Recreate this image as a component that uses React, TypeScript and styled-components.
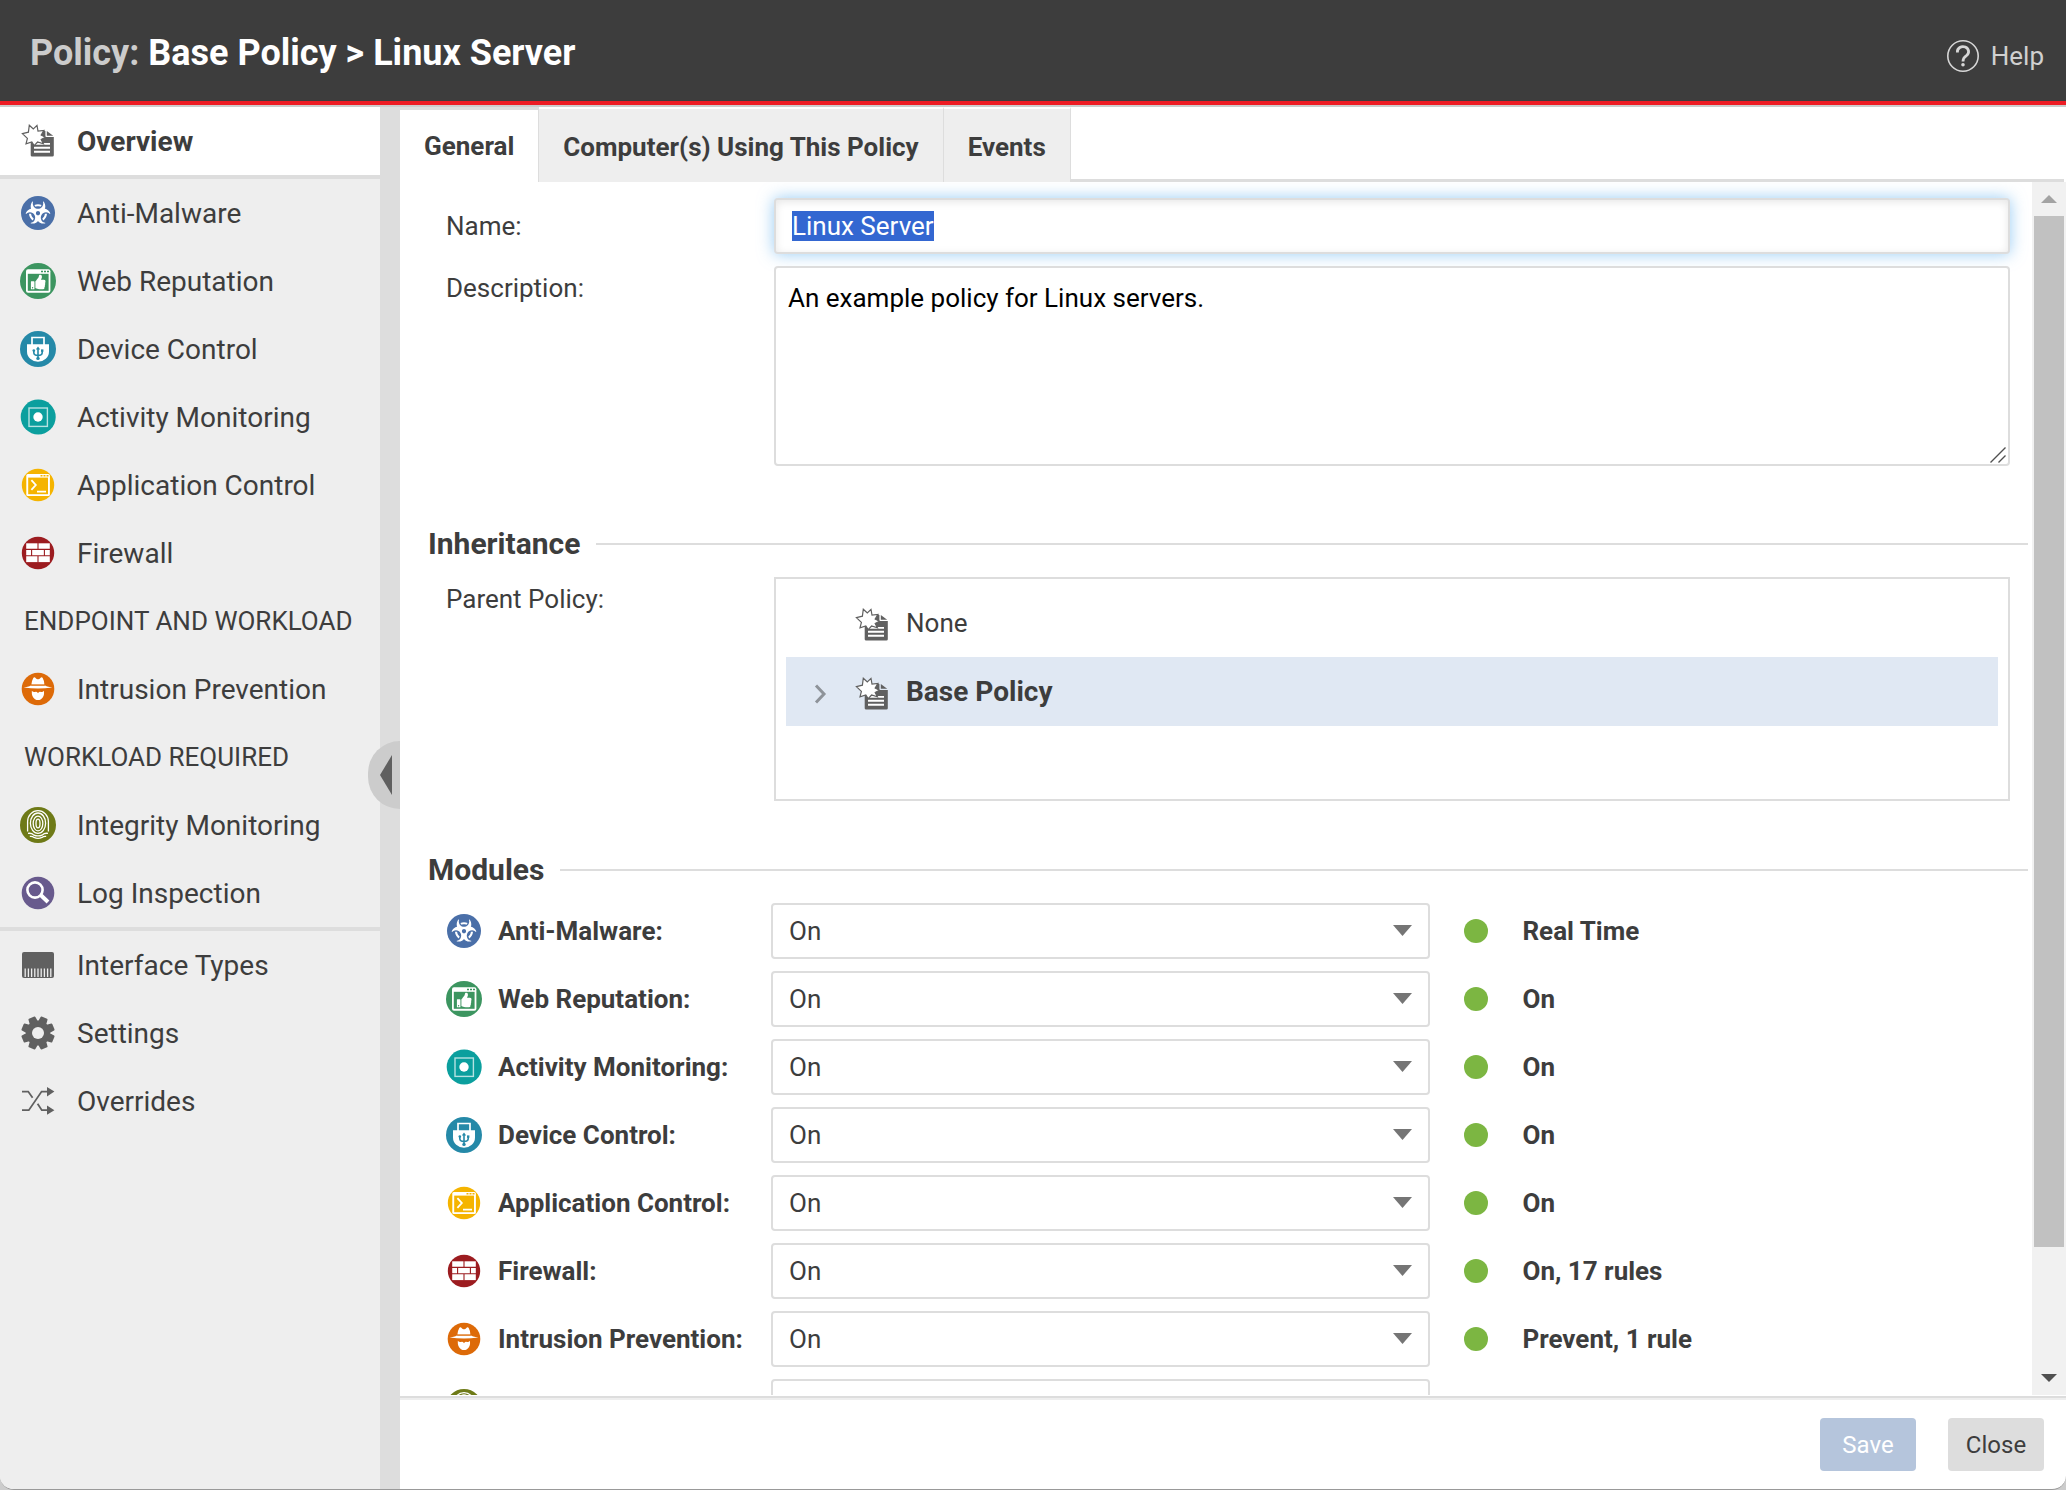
import React, { useEffect, useRef } from "react";
import styled, { createGlobalStyle, css } from "styled-components";
import { FaBiohazard, FaThumbsUp } from "react-icons/fa";

const c = {
  ink: "#3d3d3d",
  line: "#dddddd",
  panel: "#eeeeee",
  icon: "#606060",
  select: "#e0e8f3",
};

const GlobalStyle = createGlobalStyle`
  *, *::before, *::after { box-sizing: border-box; }
  body {
    margin: 0;
    background: #cccccc;
    color: ${c.ink};
    font-family: Roboto, "Liberation Sans", sans-serif;
    font-size: 26px;
    line-height: 32px;
  }
  button, input, select, textarea { font: inherit; color: inherit; }
  svg { display: block; flex: none; }
`;

/* ---------- icons ---------- */

type IconName =
  | "policy" | "malware" | "web" | "device" | "activity" | "application"
  | "firewall" | "intrusion" | "integrity" | "log" | "interface" | "settings" | "overrides";

const gearPath = (() => {
  const pts: string[] = [];
  for (let i = 0; i < 8; i++) {
    const mid = (i * 45 + 22.5) * (Math.PI / 180);
    [[-0.3, 11.6], [-0.18, 16], [0.18, 16], [0.3, 11.6]].forEach(([da, r]) => {
      pts.push(`${(18 + r * Math.cos(mid + da)).toFixed(2)} ${(18 + r * Math.sin(mid + da)).toFixed(2)}`);
    });
  }
  return `M${pts.join("L")}Z`;
})();

const drawings: Record<IconName, React.ReactNode> = {
  policy: (
    <>
      <path d="M10.7 8H25.4V14H33.8V32.2Q33.8 33.6 32.4 33.6H12.1Q10.7 33.6 10.7 32.2Z" fill={c.icon} />
      <path d="M26.8 8L33.2 12.8H26.8Z" fill={c.icon} />
      <path d="M14 20.9H30M14 24.8H30M14 28.7H30" stroke="#fff" strokeWidth="1.9" />
      <path
        d="M9.3 2.2L13.3 6L17 2.4L18 8L24 7.4L21.2 12L25.4 14.2L21.2 16.4L23.4 20.8L17.6 19L14.2 22.6L11.8 19L6 20.8L7.4 15.4L2.4 10.6L8.4 9.2Z"
        fill="#fff" stroke={c.icon} strokeWidth="1.2"
      />
    </>
  ),
  malware: (
    <>
      <circle cx="18" cy="18" r="17" fill="#4a6fa8" />
      <FaBiohazard x="5.5" y="5" size={25} color="#fff" />
    </>
  ),
  web: (
    <>
      <circle cx="18" cy="18" r="18" fill="#3c9560" />
      <rect x="6" y="6.3" width="24.4" height="23.4" rx="2" fill="#fff" />
      <rect x="7.8" y="10.8" width="20.8" height="17" fill="#3c9560" />
      <path d="M21 8.5H23M24 8.5H26M27 8.5H29" stroke="#3c9560" strokeWidth="1.6" />
      <FaThumbsUp x="10.7" y="11.6" size={15} color="#fff" />
    </>
  ),
  device: (
    <>
      <circle cx="18" cy="18" r="18" fill="#2589a8" />
      <path d="M12 14V6.5H24V14" fill="none" stroke="#fff" strokeWidth="1.7" />
      <path d="M7 13.3H29V20.5A11 10.2 0 0 1 7 20.5Z" fill="#fff" />
      <g fill="none" stroke="#2589a8" strokeWidth="1.6">
        <path d="M18 17V28M13.8 19V21.4Q13.8 24.4 18 24.4Q22.2 24.4 22.2 21.4V19" />
      </g>
      <path d="M15.8 18.4L18 15.4L20.2 18.4Z" fill="#2589a8" />
      <circle cx="13.8" cy="19.6" r="1.3" fill="#2589a8" />
      <rect x="21" y="18.4" width="2.4" height="2.4" fill="#2589a8" />
      <circle cx="18" cy="27.4" r="1.7" fill="#2589a8" />
    </>
  ),
  activity: (
    <>
      <circle cx="18.2" cy="18" r="17.5" fill="#0b9f9e" />
      <rect x="9" y="9" width="18.4" height="18.4" fill="none" stroke="#b5e2e1" strokeWidth="1.4" />
      <circle cx="18" cy="18" r="4.7" fill="#fff" />
    </>
  ),
  application: (
    <>
      <circle cx="18" cy="18" r="16.2" fill="#f5b400" />
      <rect x="6.3" y="7" width="23.6" height="22" rx="1.5" fill="#fff" />
      <rect x="8.2" y="10.6" width="19.8" height="16.6" fill="#f5b400" />
      <path d="M20.5 8.7H22.5M23.5 8.7H25.5M26.5 8.7H28.5" stroke="#f5b400" strokeWidth="1.6" />
      <path d="M11.4 13.2L15.8 18L11.4 22.8M17 24.6H26" fill="none" stroke="#fff" strokeWidth="1.8" />
    </>
  ),
  firewall: (
    <>
      <circle cx="18" cy="18" r="16.2" fill="#9c1c20" />
      <rect x="6.2" y="8.3" width="23.6" height="18.8" fill="#fff" />
      <path d="M6 14.4H30M6 20.8H30M18 8V14.4M18 20.8V27.4M11.6 14.4V20.8M24.4 14.4V20.8" stroke="#9c1c20" strokeWidth="1.1" />
    </>
  ),
  intrusion: (
    <>
      <circle cx="18" cy="18" r="16.3" fill="#dd6a08" />
      <path d="M11.4 13.6Q12 9 13.4 6.8Q14.6 5.6 15.8 7.2Q16.8 8.4 18 8.2Q19.2 8.4 20.2 7.2Q21.4 5.6 22.6 6.8Q24 9 24.4 13.6Z" fill="#fff" />
      <path d="M3.6 16.6Q10 15.4 10.8 14.4H25.2Q26 15.4 32.4 16.6Q25 17.6 18 17.6Q11 17.6 3.6 16.6Z" fill="#fff" />
      <path d="M11.2 14.2H24.8" stroke="#dd6a08" strokeWidth="0.8" />
      <path d="M11.8 19.8Q13.2 21.4 15 21Q16.8 20.4 18 22.2Q19.2 20.4 21 21Q22.8 21.4 24 19.8Q24.6 26 21 28.2Q18 30 15 28.2Q11.4 26 11.8 19.8Z" fill="#fff" />
    </>
  ),
  integrity: (
    <>
      <circle cx="18" cy="18" r="18" fill="#6e7a17" />
      <g fill="none" stroke="#fff" strokeWidth="1.3">
        <ellipse cx="18" cy="16.5" rx="2" ry="4.4" />
        <ellipse cx="18" cy="16.5" rx="4.8" ry="7.4" />
        <ellipse cx="18" cy="16.2" rx="7.6" ry="10.2" />
        <path d="M7.6 24.6V14.6A10.4 11 0 0 1 28.4 14.6V24.6" />
        <path d="M8 26.4Q11.6 25.8 13.4 27.8Q18 30 22.6 27.8Q24.4 25.8 28 26.4" />
        <path d="M9.8 29.4Q12.4 29 14 30.4Q18 32.2 22 30.4Q23.6 29 26.2 29.4" />
      </g>
    </>
  ),
  log: (
    <>
      <circle cx="18" cy="18" r="16.3" fill="#685a8d" />
      <circle cx="15" cy="15" r="7.6" fill="none" stroke="#fff" strokeWidth="2.6" />
      <path d="M20.4 19.8L28 27" stroke="#fff" strokeWidth="4" />
    </>
  ),
  interface: (
    <>
      <rect x="2" y="5" width="32" height="26" rx="2" fill={c.icon} />
      <path
        d="M5.2 21.6V30M8.4 21.6V30M11.6 21.6V30M14.8 21.6V30M18 21.6V30M21.2 21.6V30M24.4 21.6V30M27.6 21.6V30M30.8 21.6V30"
        stroke="#eeeeee" strokeWidth="1.3"
      />
    </>
  ),
  settings: (
    <>
      <path d={gearPath} fill={c.icon} stroke={c.icon} strokeWidth="1.8" strokeLinejoin="round" />
      <circle cx="18" cy="18" r="6" fill="#eeeeee" />
    </>
  ),
  overrides: (
    <>
      <path
        d="M2 8.6H8.2L12.6 14.8M2 27.2H8.8L21.6 8.6H28M17.6 20.8L21.8 27.2H28"
        fill="none" stroke={c.icon} strokeWidth="1.8"
      />
      <path d="M27 4L34.4 8.6L27 13.4ZM27 22.4L34.4 27.2L27 31.8Z" fill={c.icon} />
    </>
  ),
};

const Icon = ({ name }: { name: IconName }) => (
  <svg width="36" height="36" viewBox="0 0 36 36" aria-hidden="true">{drawings[name]}</svg>
);

/* ---------- frame ---------- */

const Window = styled.div`
  display: flex;
  flex-direction: column;
  height: 100vh;
  overflow: hidden;
  background: #ffffff;
  border-bottom: 1px solid #999999;
  border-radius: 0 0 14px 14px;
`;

const Header = styled.header`
  display: flex;
  align-items: center;
  justify-content: space-between;
  flex: none;
  height: 105px;
  padding: 11px 22px 0 30px;
  background: ${c.ink};
  border-bottom: 4px solid #ed1c24;
`;

const Title = styled.h1`
  margin: 0 0 6px;
  font-size: 36px;
  line-height: 44px;
  font-weight: 700;
  color: #ffffff;
`;

const TitlePrefix = styled.span`
  color: #cccccc;
`;

const HelpLink = styled.a`
  display: flex;
  align-items: center;
  gap: 12px;
  color: #d0d0d0;
  text-decoration: none;
`;

const Body = styled.div`
  display: flex;
  flex: 1;
  min-height: 0;
  border-top: 2px solid #cccccc;
`;

/* ---------- sidebar ---------- */

const Sidebar = styled.nav`
  flex: none;
  width: 380px;
  background: ${c.panel};
`;

const NavGroup = styled.div`
  & + & { border-top: 4px solid ${c.line}; }
`;

const NavLink = styled.a<{ $active?: boolean }>`
  display: flex;
  align-items: center;
  gap: 21px;
  height: 68px;
  padding-left: 20px;
  font-size: 28px;
  line-height: 35px;
  color: ${c.ink};
  text-decoration: none;
  ${(p) => p.$active && css`
    background: #ffffff;
    font-weight: 700;
  `}
`;

const NavCaption = styled.div`
  height: 68px;
  padding-left: 24px;
  line-height: 68px;
  white-space: nowrap;
`;

const Splitter = styled.div`
  position: relative;
  flex: none;
  width: 20px;
  background: ${c.line};
`;

const CollapseButton = styled.button`
  position: absolute;
  top: calc(50% - 57px);
  right: 0;
  display: flex;
  align-items: center;
  width: 32px;
  height: 68px;
  padding: 0 0 0 12px;
  border: 0;
  border-radius: 32px 0 0 32px;
  background: #cccccc;
`;

/* ---------- main ---------- */

const Main = styled.main`
  display: flex;
  flex-direction: column;
  flex: 1;
  min-width: 0;
`;

const TabBar = styled.div`
  display: flex;
  flex: none;
  height: 75px;
  padding-right: 2px;
`;

const Tab = styled.button<{ $active?: boolean }>`
  padding: ${(p) => (p.$active ? "0 24px" : "3px 24px 0")};
  border: 0;
  border-top: ${(p) => (p.$active ? `3px solid ${c.line}` : "2px solid #ffffff")};
  border-right: 1px solid ${c.line};
  background: ${(p) => (p.$active ? "#ffffff" : c.panel)};
  font-weight: 700;
  white-space: nowrap;
`;

const TabRest = styled.div`
  flex: 1;
  border-bottom: 3px solid ${c.line};
`;

const ScrollFrame = styled.div`
  display: flex;
  flex: 1;
  min-height: 0;
`;

const ScrollArea = styled.div`
  flex: 1;
  min-width: 0;
  padding: 16px 4px 16px 28px;
  overflow-y: auto;
  scrollbar-width: none;
`;

const ScrollBar = styled.div`
  display: flex;
  flex-direction: column;
  flex: none;
  width: 34px;
  background: #f1f1f1;
`;

const ScrollArrow = styled.div`
  display: flex;
  align-items: center;
  justify-content: center;
  height: 34px;
`;

const ScrollTrack = styled.div`
  flex: 1;
  padding: 0 2px;
`;

const ScrollThumb = styled.div`
  height: 90%;
  background: #c1c1c1;
`;

/* ---------- form ---------- */

const FieldRow = styled.div`
  display: grid;
  grid-template-columns: 328px minmax(0, 1fr);
  margin: 0 18px 12px;
`;

const FieldLabel = styled.label<{ $tall?: boolean }>`
  line-height: ${(p) => (p.$tall ? "56px" : "44px")};
`;

const boxed = css`
  width: 100%;
  border: 2px solid ${c.line};
  border-radius: 4px;
  background: #ffffff;
  outline: none;
`;

const TextInput = styled.input`
  ${boxed}
  height: 56px;
  padding: 0 16px;
  line-height: 32px;
  &:focus {
    box-shadow: inset 0 2px 8px rgba(0, 0, 0, 0.1), 0 0 16px rgba(82, 168, 236, 0.6);
  }
  &::selection {
    background: #3367d1;
    color: #ffffff;
  }
`;

const AreaWrap = styled.div`
  position: relative;
  padding-bottom: 9px;
`;

const TextArea = styled.textarea`
  ${boxed}
  display: block;
  height: 200px;
  padding: 14px 12px;
  resize: none;
  color: #000000;
`;

const ResizeGrip = styled.svg`
  position: absolute;
  right: 4px;
  bottom: 12px;
  pointer-events: none;
`;

const SectionHeading = styled.h2`
  display: flex;
  align-items: center;
  gap: 16px;
  margin: 52px 0 16px;
  font-size: 30px;
  line-height: 34px;
  font-weight: 700;
  &::after {
    content: "";
    flex: 1;
    height: 2px;
    background: ${c.line};
  }
`;

const Tree = styled.div`
  height: 224px;
  padding: 9px 10px;
  border: 2px solid ${c.line};
`;

const TreeItem = styled.div<{ $selected?: boolean }>`
  display: grid;
  grid-template-columns: 52px 36px 1fr;
  align-items: center;
  column-gap: 16px;
  height: 69px;
  font-weight: ${(p) => (p.$selected ? 700 : 400)};
  font-size: ${(p) => (p.$selected ? "28px" : "26px")};
  background: ${(p) => (p.$selected ? c.select : "transparent")};
  svg { margin-top: 4px; }
`;

const TreeToggle = styled.span`
  padding-left: 28px;
`;

const ModuleRow = styled.div`
  display: grid;
  grid-template-columns: 325px minmax(0, 33fr) minmax(0, 29fr);
  align-items: center;
  margin: 0 18px 12px;
  font-weight: 700;
`;

const ModuleLabel = styled.label`
  display: flex;
  align-items: center;
  gap: 16px;
  white-space: nowrap;
`;

const SelectWrap = styled.div`
  position: relative;
`;

const Select = styled.select`
  ${boxed}
  display: block;
  height: 56px;
  padding: 0 48px 0 16px;
  font-weight: 400;
  appearance: none;
`;

const SelectArrow = styled.svg`
  position: absolute;
  top: 22px;
  right: 18px;
  pointer-events: none;
`;

const Status = styled.div`
  display: flex;
  align-items: center;
  gap: 34px;
  padding-left: 34px;
  &::before {
    content: "";
    width: 24px;
    height: 24px;
    border-radius: 50%;
    background: #7cb642;
  }
`;

const Footer = styled.footer`
  display: flex;
  align-items: center;
  justify-content: flex-end;
  gap: 32px;
  flex: none;
  height: 93px;
  margin-top: 1px;
  padding: 2px 22px 0;
  border-top: 2px solid ${c.line};
  box-shadow: inset 0 2px 0 ${c.panel};
`;

const FooterButton = styled.button<{ $primary?: boolean }>`
  width: 96px;
  height: 53px;
  padding: 0;
  border: 0;
  border-radius: 4px;
  font-size: 24px;
  background: ${(p) => (p.$primary ? "#b5c5dc" : c.line)};
  color: ${(p) => (p.$primary ? "#ffffff" : c.ink)};
`;

/* ---------- data ---------- */

type NavEntry = { label: string; icon?: IconName };

const modulesNav: NavEntry[] = [
  { label: "Anti-Malware", icon: "malware" },
  { label: "Web Reputation", icon: "web" },
  { label: "Device Control", icon: "device" },
  { label: "Activity Monitoring", icon: "activity" },
  { label: "Application Control", icon: "application" },
  { label: "Firewall", icon: "firewall" },
  { label: "ENDPOINT AND WORKLOAD" },
  { label: "Intrusion Prevention", icon: "intrusion" },
  { label: "WORKLOAD REQUIRED" },
  { label: "Integrity Monitoring", icon: "integrity" },
  { label: "Log Inspection", icon: "log" },
];

const settingsNav: NavEntry[] = [
  { label: "Interface Types", icon: "interface" },
  { label: "Settings", icon: "settings" },
  { label: "Overrides", icon: "overrides" },
];

const modules: { id: IconName; label: string; status: string }[] = [
  { id: "malware", label: "Anti-Malware:", status: "Real Time" },
  { id: "web", label: "Web Reputation:", status: "On" },
  { id: "activity", label: "Activity Monitoring:", status: "On" },
  { id: "device", label: "Device Control:", status: "On" },
  { id: "application", label: "Application Control:", status: "On" },
  { id: "firewall", label: "Firewall:", status: "On, 17 rules" },
  { id: "intrusion", label: "Intrusion Prevention:", status: "Prevent, 1 rule" },
  { id: "integrity", label: "Integrity Monitoring:", status: "On" },
];

const NavList = ({ items }: { items: NavEntry[] }) => (
  <NavGroup>
    {items.map((item) =>
      item.icon ? (
        <NavLink key={item.label} href="#">
          <Icon name={item.icon} />
          {item.label}
        </NavLink>
      ) : (
        <NavCaption key={item.label}>{item.label}</NavCaption>
      )
    )}
  </NavGroup>
);

export default function App() {
  const nameRef = useRef<HTMLInputElement>(null);

  useEffect(() => {
    nameRef.current?.focus({ preventScroll: true });
    nameRef.current?.select();
  }, []);

  return (
    <>
      <GlobalStyle />
      <Window>
        <Header>
          <Title>
            <TitlePrefix>Policy:</TitlePrefix> Base Policy &gt; Linux Server
          </Title>
          <HelpLink href="#">
            <svg width="32" height="32" viewBox="0 0 32 32" fill="none" stroke="#d7d7d7" aria-hidden="true">
              <circle cx="16" cy="16" r="15.2" strokeWidth="1.6" />
              <path d="M10.4 12.6V12A5.6 5 0 1 1 19.4 15.6Q16 17.8 16 21.4" strokeWidth="2.8" />
              <circle cx="16" cy="24.8" r="1.8" fill="#d7d7d7" stroke="none" />
            </svg>
            Help
          </HelpLink>
        </Header>
        <Body>
          <Sidebar aria-label="Policy sections">
            <NavGroup>
              <NavLink href="#" $active aria-current="page">
                <Icon name="policy" />
                Overview
              </NavLink>
            </NavGroup>
            <NavList items={modulesNav} />
            <NavList items={settingsNav} />
          </Sidebar>
          <Splitter>
            <CollapseButton type="button" aria-label="Collapse sidebar">
              <svg width="12" height="40" viewBox="0 0 12 40" aria-hidden="true">
                <path d="M12 0V40L0 20Z" fill={c.icon} />
              </svg>
            </CollapseButton>
          </Splitter>
          <Main>
            <TabBar role="tablist">
              <Tab type="button" role="tab" aria-selected="true" $active>General</Tab>
              <Tab type="button" role="tab" aria-selected="false">Computer(s) Using This Policy</Tab>
              <Tab type="button" role="tab" aria-selected="false">Events</Tab>
              <TabRest />
            </TabBar>
            <ScrollFrame>
              <ScrollArea>
                <FieldRow>
                  <FieldLabel htmlFor="policy-name" $tall>Name:</FieldLabel>
                  <TextInput id="policy-name" ref={nameRef} type="text" defaultValue="Linux Server" />
                </FieldRow>
                <FieldRow>
                  <FieldLabel htmlFor="policy-description">Description:</FieldLabel>
                  <AreaWrap>
                    <TextArea id="policy-description" defaultValue="An example policy for Linux servers." />
                    <ResizeGrip width="16" height="16" viewBox="0 0 16 16" aria-hidden="true">
                      <path d="M0.5 15.5L15.5 0.5M8.5 15.5L15.5 8.5" stroke="#505050" strokeWidth="1.4" />
                    </ResizeGrip>
                  </AreaWrap>
                </FieldRow>

                <SectionHeading>Inheritance</SectionHeading>
                <FieldRow>
                  <FieldLabel as="span" id="parent-policy">Parent Policy:</FieldLabel>
                  <Tree role="tree" aria-labelledby="parent-policy">
                    <TreeItem role="treeitem" aria-selected="false">
                      <TreeToggle />
                      <Icon name="policy" />
                      None
                    </TreeItem>
                    <TreeItem role="treeitem" aria-selected="true" aria-expanded="false" $selected>
                      <TreeToggle>
                        <svg width="13" height="20" viewBox="0 0 13 20" aria-hidden="true">
                          <path d="M2 1.5L10 10L2 18.5" fill="none" stroke="#8e9399" strokeWidth="3" />
                        </svg>
                      </TreeToggle>
                      <Icon name="policy" />
                      Base Policy
                    </TreeItem>
                  </Tree>
                </FieldRow>

                <SectionHeading>Modules</SectionHeading>
                {modules.map((m) => (
                  <ModuleRow key={m.id}>
                    <ModuleLabel htmlFor={`module-${m.id}`}>
                      <Icon name={m.id} />
                      {m.label}
                    </ModuleLabel>
                    <SelectWrap>
                      <Select id={`module-${m.id}`} defaultValue="On">
                        <option>On</option>
                        <option>Off</option>
                      </Select>
                      <SelectArrow width="19" height="11" viewBox="0 0 19 11" aria-hidden="true">
                        <path d="M0 0H19L9.5 11Z" fill="#757575" />
                      </SelectArrow>
                    </SelectWrap>
                    <Status>{m.status}</Status>
                  </ModuleRow>
                ))}
              </ScrollArea>
              <ScrollBar aria-hidden="true">
                <ScrollArrow>
                  <svg width="16" height="8" viewBox="0 0 16 8"><path d="M0 8L8 0L16 8Z" fill="#a3a3a3" /></svg>
                </ScrollArrow>
                <ScrollTrack>
                  <ScrollThumb />
                </ScrollTrack>
                <ScrollArrow>
                  <svg width="16" height="8" viewBox="0 0 16 8"><path d="M0 0L8 8L16 0Z" fill="#505050" /></svg>
                </ScrollArrow>
              </ScrollBar>
            </ScrollFrame>
            <Footer>
              <FooterButton type="button" disabled $primary>Save</FooterButton>
              <FooterButton type="button">Close</FooterButton>
            </Footer>
          </Main>
        </Body>
      </Window>
    </>
  );
}
